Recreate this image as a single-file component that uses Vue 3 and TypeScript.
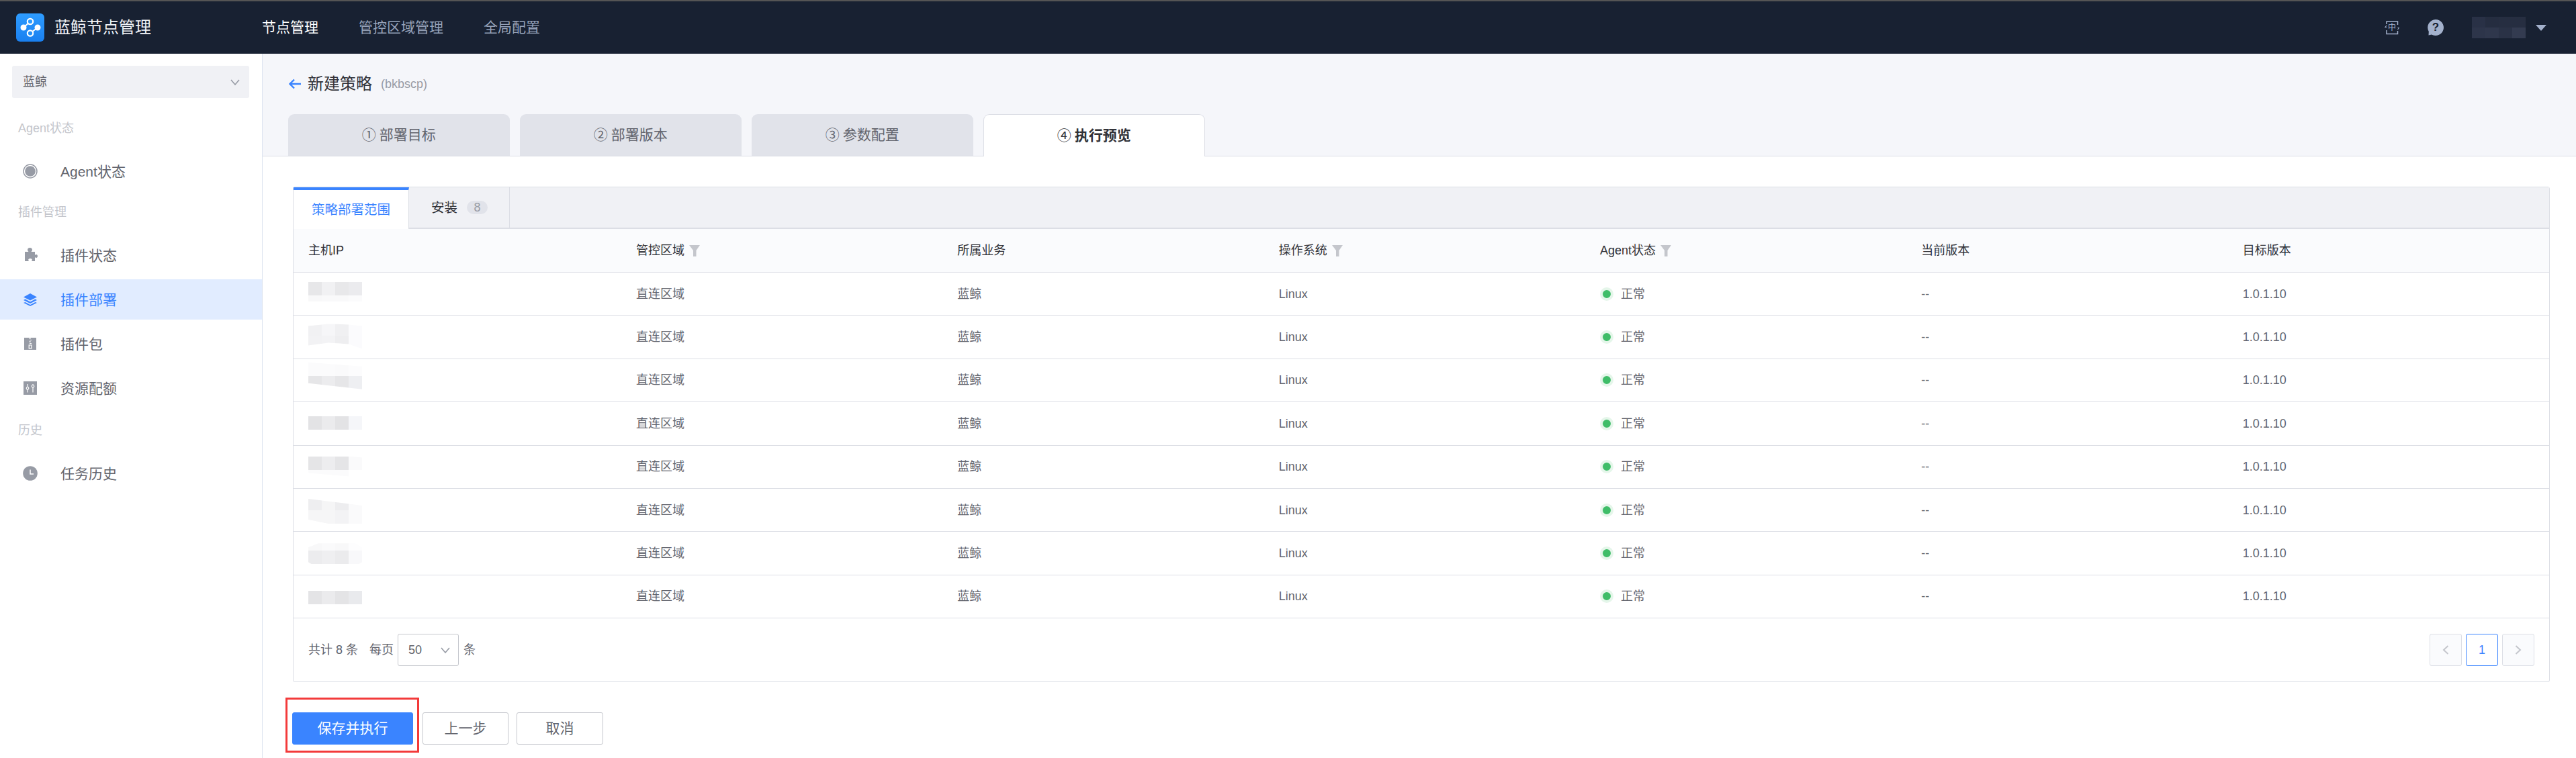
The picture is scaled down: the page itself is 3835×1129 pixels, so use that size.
<script setup lang="ts">
interface Band { h: number; c: string[] }
interface Mosaic { top: number; clip?: string; bands: Band[] }

const steps = [
  { n: '①', label: '部署目标' },
  { n: '②', label: '部署版本' },
  { n: '③', label: '参数配置' },
  { n: '④', label: '执行预览', active: true },
]

const mosaics: Mosaic[] = [
  { top: 14, bands: [{ h: 20, c: ['#e7e7e9', '#f1f1f3', '#e8e8ea', '#ebebee'] }, { h: 9, c: ['#f8f8f9', '#f9f9fa', '#f9f9fa', '#fbfbfc'] }] },
  { top: 12, clip: 'polygon(0 3px,30px 0,60px 1px,80px 3px,80px 37px,60px 30px,30px 28px,0 32px)', bands: [{ h: 18, c: ['#f1f1f3', '#f6f6f8', '#f0f0f2', '#fbfbfd'] }, { h: 20, c: ['#f2f2f4', '#f3f3f5', '#eeeef0', '#fbfbfd'] }] },
  { top: 5, clip: 'polygon(0 0,80px 6px,80px 40px,0 31px)', bands: [{ h: 20, c: ['#fbfbfc', '#fbfbfc', '#fafafb', '#fcfcfd'] }, { h: 20, c: ['#e6e6e8', '#ececee', '#e6e6e8', '#eeeff2'] }] },
  { top: 21, bands: [{ h: 20, c: ['#e3e3e5', '#ebebed', '#e3e3e5', '#f5f6f9'] }] },
  { top: 16, clip: 'polygon(0 0,60px 0,80px 2px,80px 21px,60px 30px,0 25px)', bands: [{ h: 20, c: ['#e5e5e7', '#ededef', '#e5e5e7', '#fafafb'] }, { h: 10, c: ['#fbfbfc', '#fbfbfc', '#fbfbfc', '#ffffff'] }] },
  { top: 15, clip: 'polygon(0 0,80px 10px,80px 37px,30px 37px,0 31px)', bands: [{ h: 17, c: ['#eeeef0', '#f5f5f6', '#ededef', '#fafafb'] }, { h: 20, c: ['#f6f6f7', '#f6f6f7', '#f3f3f5', '#fafafb'] }] },
  { top: 17, clip: 'polygon(0 6px,15px 0,70px 0,80px 6px,80px 28px,75px 31px,5px 31px,0 28px)', bands: [{ h: 11, c: ['#f8f8f9', '#fafafb', '#f8f8f9', '#fdfdfe'] }, { h: 20, c: ['#ececee', '#efeff1', '#ebebed', '#f8f8fa'] }] },
  { top: 23, bands: [{ h: 20, c: ['#e4e4e6', '#ebebed', '#e4e4e6', '#e9eaed'] }] },
]

const nameBlur: string[][] = [
  ['#293146', '#252d40', '#262e41', '#262e41'],
  ['#2d354a', '#2f374c', '#2a3246', '#333b50'],
]

const columns = [
  { label: '主机IP' },
  { label: '管控区域', filter: true },
  { label: '所属业务' },
  { label: '操作系统', filter: true },
  { label: 'Agent状态', filter: true },
  { label: '当前版本' },
  { label: '目标版本' },
]
</script>

<template>
  <div class="page">
    <header class="topbar">
      <div class="brand">
        <svg class="logo" viewBox="0 0 42 42" width="42" height="42">
          <defs>
            <linearGradient id="lg" x1="0" y1="0" x2="0" y2="1">
              <stop offset="0" stop-color="#2e9cff" />
              <stop offset="1" stop-color="#1a80f0" />
            </linearGradient>
          </defs>
          <rect width="42" height="42" rx="6" fill="url(#lg)" />
          <path d="M11 21 21 12M32 21 21 29.5" stroke="#fff" stroke-width="2" fill="none" />
          <circle cx="11" cy="21" r="4.5" fill="#fff" />
          <circle cx="32" cy="21" r="4.5" fill="#fff" />
          <circle cx="21" cy="12" r="4.2" fill="#2e9cff" stroke="#fff" stroke-width="2.2" />
          <circle cx="21" cy="29.5" r="4.2" fill="#2490f8" stroke="#fff" stroke-width="2.2" />
        </svg>
        <span class="brand-name">蓝鲸节点管理</span>
      </div>
      <nav class="topnav">
        <span class="topnav-item on">节点管理</span>
        <span class="topnav-item">管控区域管理</span>
        <span class="topnav-item">全局配置</span>
      </nav>
      <div class="top-right">
        <span class="lang">
          <svg viewBox="0 0 22 22" width="22" height="22">
            <path d="M3 6V2h16.500v5M19.500 16v4.500H3V15" fill="none" stroke="#a3b1cc" stroke-width="1.500" />
            <path d="M3 8 1 10.500h2M19.500 14l2-2.500h-2" fill="none" stroke="#a3b1cc" stroke-width="1.200" />
          </svg>
          <span class="lang-text">中</span>
        </span>
        <svg class="help" viewBox="0 0 24 24" width="24" height="24">
          <path d="M12 0a12 12 0 1 1-6 22.400L1.500 23.500 1.800 18A12 12 0 0 1 12 0z" fill="#a3b1cc" />
        </svg>
        <span class="help-q">?</span>
        <div class="name-blur">
          <div v-for="(band, i) in nameBlur" :key="i" class="name-band">
            <i v-for="(c, j) in band" :key="j" :style="{ background: c }" />
          </div>
        </div>
        <svg class="caret" viewBox="0 0 16 9" width="16" height="9"><path d="M0 0h16L8 9z" fill="#a3b1cc" /></svg>
      </div>
    </header>

    <div class="body">
      <aside class="side">
        <div class="biz">
          <span>蓝鲸</span>
          <svg viewBox="0 0 14 14" width="14" height="14"><path d="M1 4l6 7 6-7" fill="none" stroke="#979ba5" stroke-width="1.600" /></svg>
        </div>

        <section class="group">
          <div class="group-title">Agent状态</div>
          <div class="item">
            <svg viewBox="0 0 22 22" width="22" height="22">
              <circle cx="11" cy="11" r="10" fill="none" stroke="#979ba5" stroke-width="1.500" />
              <circle cx="11" cy="11" r="7.800" fill="#979ba5" />
            </svg>
            <span>Agent状态</span>
          </div>
        </section>

        <section class="group">
          <div class="group-title">插件管理</div>
          <div class="item">
            <svg viewBox="0 0 22 22" width="22" height="22">
              <path d="M3 6h5.500c-1-1-1.500-2-1.500-3 0-1.700 1.700-3 3.500-3S14 1.300 14 3c0 1-.5 2-1.500 3H18v5c1-.8 1.500-1 2-1 1.200 0 2 1 2 2.500S21.200 15 20 15c-.5 0-1-.3-2-1v6h-5c.6-1 .8-1.500.8-2 0-1.200-1.300-2-2.800-2s-2.800.8-2.800 2c0 .5.200 1 .8 2H3z" fill="#979ba5" />
            </svg>
            <span>插件状态</span>
          </div>
          <div class="item active">
            <svg viewBox="0 0 22 22" width="22" height="22">
              <path d="M11 2 21 7.500 11 12.500 1 7.500z" fill="#3a84ff" />
              <path d="M3.500 10.500 1 12l10 5 10-5-2.500-1.500L11 14.500zM3.500 15 1 16l10 5 10-5-2.500-1L11 19z" fill="#3a84ff" />
            </svg>
            <span>插件部署</span>
          </div>
          <div class="item">
            <svg viewBox="0 0 22 22" width="22" height="22">
              <rect x="2" y="2" width="18" height="18" fill="#979ba5" />
              <path d="M9 3h3M10 5.500h3M9 8h3M10 10.500h3" stroke="#fff" stroke-width="1.200" />
              <rect x="9.200" y="13" width="3.600" height="5" fill="none" stroke="#fff" stroke-width="1.200" />
            </svg>
            <span>插件包</span>
          </div>
          <div class="item">
            <svg viewBox="0 0 22 22" width="22" height="22">
              <rect x="1" y="1" width="20" height="20" fill="#979ba5" />
              <path d="M7 5v4.500M7 13v4.500M15 5v1.500M15 10v7.500" stroke="#fff" stroke-width="1.200" />
              <circle cx="7" cy="11.300" r="1.800" fill="none" stroke="#fff" stroke-width="1.200" />
              <circle cx="15" cy="8.300" r="1.800" fill="none" stroke="#fff" stroke-width="1.200" />
            </svg>
            <span>资源配额</span>
          </div>
        </section>

        <section class="group">
          <div class="group-title">历史</div>
          <div class="item">
            <svg viewBox="0 0 22 22" width="22" height="22">
              <circle cx="11" cy="11" r="10.800" fill="#979ba5" />
              <path d="M11 5.500V12h5" fill="none" stroke="#fff" stroke-width="1.500" />
            </svg>
            <span>任务历史</span>
          </div>
        </section>
      </aside>

      <main class="main">
        <div class="head">
          <div class="head-title">
            <svg viewBox="0 0 20 16" width="20" height="16">
              <path d="M19 8H3M9 1.500 2.500 8 9 14.500" fill="none" stroke="#3a84ff" stroke-width="2.400" />
            </svg>
            <span class="head-name">新建策略</span>
            <span class="head-sub">(bkbscp)</span>
          </div>
          <div class="steps">
            <div v-for="s in steps" :key="s.n" class="step" :class="{ on: s.active }">
              <span class="step-n">{{ s.n }}</span>
              <span>{{ s.label }}</span>
            </div>
          </div>
        </div>

        <div class="content">
          <div class="panel">
            <div class="tabs">
              <div class="tab on">策略部署范围</div>
              <div class="tab">安装<span class="badge">8</span></div>
            </div>

            <div class="row thead">
              <div v-for="c in columns" :key="c.label" class="cell">
                {{ c.label }}
                <svg v-if="c.filter" class="funnel" viewBox="0 0 16 17" width="16" height="17">
                  <path d="M0 0h16L10.500 8v9H6V8z" fill="#c4c6cc" />
                </svg>
              </div>
            </div>

            <div v-for="(m, i) in mosaics" :key="i" class="row">
              <div class="cell ip">
                <div class="mosaic" :style="{ marginTop: m.top + 'px', clipPath: m.clip }">
                  <div v-for="(b, j) in m.bands" :key="j" class="band" :style="{ height: b.h + 'px' }">
                    <i v-for="(c, k) in b.c" :key="k" :style="{ background: c }" />
                  </div>
                </div>
              </div>
              <div class="cell">直连区域</div>
              <div class="cell">蓝鲸</div>
              <div class="cell">Linux</div>
              <div class="cell"><span class="dot" />正常</div>
              <div class="cell">--</div>
              <div class="cell">1.0.1.10</div>
            </div>

            <div class="foot">
              <span class="total">共计 8 条</span>
              <span class="per">每页</span>
              <span class="size">
                <span>50</span>
                <svg viewBox="0 0 14 14" width="14" height="14"><path d="M1 4l6 7 6-7" fill="none" stroke="#979ba5" stroke-width="1.600" /></svg>
              </span>
              <span class="per-unit">条</span>
              <div class="pager">
                <span class="page-btn off">
                  <svg viewBox="0 0 10 14" width="10" height="14"><path d="M8.500 1 2 7l6.500 6" fill="none" stroke="#c4c6cc" stroke-width="2" /></svg>
                </span>
                <span class="page-btn cur">1</span>
                <span class="page-btn off">
                  <svg viewBox="0 0 10 14" width="10" height="14"><path d="M1.500 1 8 7l-6.500 6" fill="none" stroke="#c4c6cc" stroke-width="2" /></svg>
                </span>
              </div>
            </div>
          </div>

          <div class="actions">
            <div class="btn primary">保存并执行</div>
            <div class="btn prev">上一步</div>
            <div class="btn cancel">取消</div>
            <div class="marker" />
          </div>
        </div>
      </main>
    </div>
  </div>
</template>

<style>
html, body { margin: 0; background: #fff; }
</style>

<style scoped>
.page {
  width: 3835px;
  height: 1129px;
  overflow: hidden;
  display: flex;
  flex-direction: column;
  font-family: "Liberation Sans", "Noto Sans CJK SC", sans-serif;
  font-size: 18px;
  line-height: 24px;
  color: #63656e;
}
.topbar {
  height: 78px;
  flex: none;
  border-top: 2px solid #555;
  background: #182132;
  display: flex;
  align-items: center;
  padding: 0 44px 0 24px;
}
.brand { width: 366px; display: flex; align-items: center; gap: 15px; flex: none; }
.logo { flex: none; }
.brand-name { font-size: 24px; color: #f0f2f6; }
.topnav { display: flex; gap: 60px; font-size: 21px; color: #96a2b9; }
.topnav-item.on { color: #fff; }
.top-right { margin-left: auto; display: flex; align-items: center; position: relative; }
.lang { position: relative; width: 22px; height: 22px; display: block; margin-right: 42px; }
.lang svg { display: block; }
.lang-text {
  position: absolute;
  inset: 0;
  text-align: center;
  line-height: 22px;
  font-size: 12px;
  color: #a3b1cc;
}
.help { display: block; }
.help-q {
  position: absolute;
  left: 64px;
  top: 4px;
  width: 24px;
  text-align: center;
  font-size: 17px;
  line-height: 24px;
  font-weight: 700;
  color: #182132;
}
.name-blur { margin-left: 42px; margin-right: 15px; }
.name-band { display: flex; }
.name-band i { width: 20px; height: 16px; display: block; }
.caret { display: block; }

.body { flex: 1; display: flex; min-height: 0; }
.side {
  width: 390px;
  flex: none;
  border-right: 1px solid #dde4f0;
  background: #fff;
}
.biz {
  margin: 18px 19px 0 18px;
  height: 48px;
  background: #f0f1f5;
  border-radius: 3px;
  display: flex;
  align-items: center;
  justify-content: space-between;
  padding: 0 14px 0 16px;
}
.group { margin-top: 16px; display: flex; flex-direction: column; gap: 6px; }
.biz + .group { margin-top: 30px; }
.group:last-child { margin-top: 18px; }
.group-title {
  height: 30px;
  line-height: 30px;
  padding-left: 27px;
  margin-bottom: 13px;
  color: #c4c6cc;
}
.item {
  height: 60px;
  display: flex;
  align-items: center;
  gap: 34px;
  padding-left: 34px;
  font-size: 21px;
}
.item svg { flex: none; }
.item span { padding-top: 2px; }
.item.active { background: #e1ecff; color: #3a84ff; }

.main { flex: 1; min-width: 0; display: flex; flex-direction: column; }
.head {
  height: 153px;
  flex: none;
  box-sizing: border-box;
  background: #f5f6fa;
  border-bottom: 1px solid #dcdee5;
  padding: 30px 0 0 38px;
}
.head-title { height: 30px; display: flex; align-items: center; }
.head-title svg { display: block; margin-right: 9px; }
.head-name { font-size: 24px; color: #313238; margin-right: 13px; }
.head-sub { color: #979ba5; }
.steps { display: flex; gap: 15.5px; margin-top: 30px; align-items: flex-start; }
.step {
  width: 329.5px;
  height: 62px;
  box-sizing: border-box;
  background: #e1e3ea;
  border-radius: 9px 9px 0 0;
  display: flex;
  align-items: center;
  justify-content: center;
  gap: 5px;
  font-size: 21px;
}
.step.on {
  height: 63px;
  background: #fff;
  border: 1px solid #dcdee5;
  border-bottom: 0;
  font-weight: 700;
  color: #313238;
}
.step-n { font-weight: 400; }
.content { flex: 1; background: #fff; padding: 45px 39px 0 45px; }
.panel { border: 1px solid #dcdee5; border-radius: 3px; }
.tabs {
  height: 62px;
  box-sizing: border-box;
  background: #f0f1f5;
  border-bottom: 2px solid #dcdee5;
  display: flex;
}
.tab {
  display: flex;
  align-items: center;
  font-size: 19.5px;
  color: #313238;
  padding: 0 32px 0 33px;
  border-right: 1px solid #dcdee5;
  height: 60px;
}
.tab.on {
  width: 172px;
  height: 62px;
  box-sizing: border-box;
  padding: 0 0 0 27px;
  background: #fff;
  color: #3a84ff;
  border-top: 4px solid #3a84ff;
}
.badge {
  margin-left: 14px;
  width: 31px;
  height: 20px;
  line-height: 20px;
  border-radius: 10px;
  background: #e1e3ea;
  text-align: center;
  font-size: 18px;
  color: #979ba5;
}
.row {
  display: grid;
  grid-template-columns: 488px repeat(6, 1fr);
  height: 64.375px;
  box-sizing: border-box;
  border-bottom: 1px solid #dcdee5;
}
.row.thead {
  height: 65px;
  background: #fafbfd;
  color: #313238;
}
.cell {
  display: flex;
  align-items: center;
  padding-left: 22px;
  min-width: 0;
}
.cell.ip { align-items: flex-start; }
.funnel { margin-left: 7px; flex: none; }
.mosaic { width: 80px; }
.band { display: flex; }
.band i { width: 20px; display: block; height: 100%; }
.dot {
  width: 20px;
  height: 20px;
  box-sizing: border-box;
  border-radius: 50%;
  background: #3fbd68;
  border: 4px solid #e5f6ea;
  margin-right: 11px;
  flex: none;
}
.foot {
  height: 94px;
  display: flex;
  align-items: center;
  padding: 0 22px;
}
.per { margin-left: 17px; }
.size {
  width: 91px;
  height: 48px;
  box-sizing: border-box;
  border: 1px solid #c4c6cc;
  border-radius: 3px;
  margin: 0 7px 0 6px;
  display: flex;
  align-items: center;
  justify-content: space-between;
  padding: 0 12px 0 15px;
}
.pager { margin-left: auto; display: flex; gap: 6px; }
.page-btn {
  width: 48px;
  height: 48px;
  box-sizing: border-box;
  border: 1px solid #dcdee5;
  border-radius: 3px;
  display: flex;
  align-items: center;
  justify-content: center;
}
.page-btn.off { background: #fafbfd; }
.page-btn.cur { border-color: #3a84ff; color: #3a84ff; }
.actions {
  position: relative;
  margin-top: 45px;
  margin-left: -1px;
  display: flex;
  width: max-content;
}
.btn {
  height: 48px;
  box-sizing: border-box;
  border-radius: 3px;
  border: 1px solid #c4c6cc;
  display: flex;
  align-items: center;
  justify-content: center;
  font-size: 21px;
  background: #fff;
}
.btn.primary { width: 180px; background: #3a84ff; border-color: #3a84ff; color: #fff; margin-right: 14px; }
.btn.prev { width: 128px; margin-right: 12px; }
.btn.cancel { width: 129px; }
.marker {
  position: absolute;
  left: -10px;
  top: -22px;
  width: 199px;
  height: 82px;
  box-sizing: border-box;
  border: 3px solid #f33a3a;
}
</style>
